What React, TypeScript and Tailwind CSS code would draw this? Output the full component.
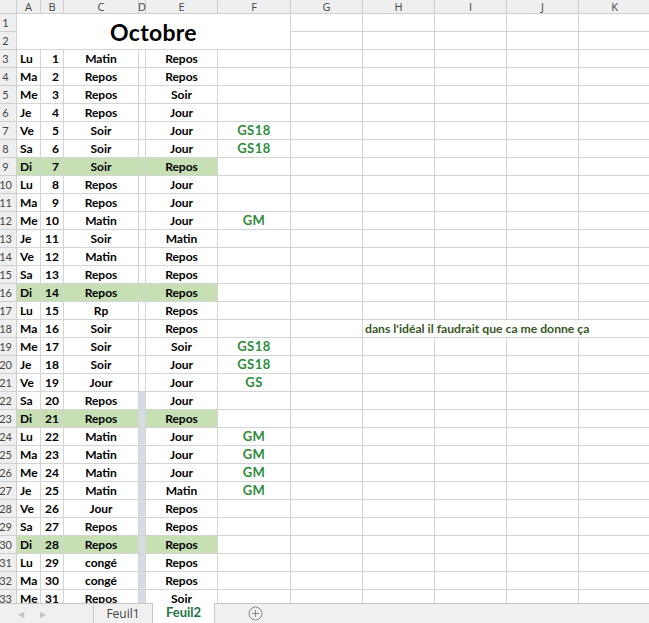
type Row = {
  n: number
  day: string
  d: number
  c: string
  e: string
  f?: string
  green?: boolean
}

const rows: Row[] = [
  { n: 3, day: 'Lu', d: 1, c: 'Matin', e: 'Repos' },
  { n: 4, day: 'Ma', d: 2, c: 'Repos', e: 'Repos' },
  { n: 5, day: 'Me', d: 3, c: 'Repos', e: 'Soir' },
  { n: 6, day: 'Je', d: 4, c: 'Repos', e: 'Jour' },
  { n: 7, day: 'Ve', d: 5, c: 'Soir', e: 'Jour', f: 'GS18' },
  { n: 8, day: 'Sa', d: 6, c: 'Soir', e: 'Jour', f: 'GS18' },
  { n: 9, day: 'Di', d: 7, c: 'Soir', e: 'Repos', green: true },
  { n: 10, day: 'Lu', d: 8, c: 'Repos', e: 'Jour' },
  { n: 11, day: 'Ma', d: 9, c: 'Repos', e: 'Jour' },
  { n: 12, day: 'Me', d: 10, c: 'Matin', e: 'Jour', f: 'GM' },
  { n: 13, day: 'Je', d: 11, c: 'Soir', e: 'Matin' },
  { n: 14, day: 'Ve', d: 12, c: 'Matin', e: 'Repos' },
  { n: 15, day: 'Sa', d: 13, c: 'Repos', e: 'Repos' },
  { n: 16, day: 'Di', d: 14, c: 'Repos', e: 'Repos', green: true },
  { n: 17, day: 'Lu', d: 15, c: 'Rp', e: 'Repos' },
  { n: 18, day: 'Ma', d: 16, c: 'Soir', e: 'Repos' },
  { n: 19, day: 'Me', d: 17, c: 'Soir', e: 'Soir', f: 'GS18' },
  { n: 20, day: 'Je', d: 18, c: 'Soir', e: 'Jour', f: 'GS18' },
  { n: 21, day: 'Ve', d: 19, c: 'Jour', e: 'Jour', f: 'GS' },
  { n: 22, day: 'Sa', d: 20, c: 'Repos', e: 'Jour' },
  { n: 23, day: 'Di', d: 21, c: 'Repos', e: 'Repos', green: true },
  { n: 24, day: 'Lu', d: 22, c: 'Matin', e: 'Jour', f: 'GM' },
  { n: 25, day: 'Ma', d: 23, c: 'Matin', e: 'Jour', f: 'GM' },
  { n: 26, day: 'Me', d: 24, c: 'Matin', e: 'Jour', f: 'GM' },
  { n: 27, day: 'Je', d: 25, c: 'Matin', e: 'Matin', f: 'GM' },
  { n: 28, day: 'Ve', d: 26, c: 'Jour', e: 'Repos' },
  { n: 29, day: 'Sa', d: 27, c: 'Repos', e: 'Repos' },
  { n: 30, day: 'Di', d: 28, c: 'Repos', e: 'Repos', green: true },
  { n: 31, day: 'Lu', d: 29, c: 'congé', e: 'Repos' },
  { n: 32, day: 'Ma', d: 30, c: 'congé', e: 'Repos' },
  { n: 33, day: 'Me', d: 31, c: 'Repos', e: 'Soir' },
]

const letters = ['A', 'B', 'C', 'D', 'E', 'F', 'G', 'H', 'I', 'J', 'K']

const cell = 'border-r border-b border-[#d4d4d4] flex items-end pb-[1px] leading-[15px] overflow-hidden whitespace-nowrap'
const hdr = 'bg-[#efefef] border-r border-b border-[#cfcfcf] text-[#444] text-[11px] flex items-center'

function EmptyCells({ n, count }: { n: number; count: number }) {
  return (
    <>
      {Array.from({ length: count }).map((_, i) => (
        <div key={`${n}-e${i}`} className={cell} />
      ))}
    </>
  )
}

function RowHeader({ n }: { n: number }) {
  return (
    <div className={`${hdr} justify-center pr-[5px]`}>
      <span className="leading-none">{n}</span>
    </div>
  )
}

export default function App() {
  return (
    <div className="w-[649px] h-[623px] overflow-hidden flex flex-col bg-white" style={{ fontFamily: 'Lato, "Open Sans", sans-serif' }}>
      <div className="flex-1 overflow-hidden">
        <div className="grid grid-cols-[17px_24px_23px_75px_7px_72px_73px_72px_72px_72px_72px_72px] grid-rows-[14px_18px_18px] auto-rows-[18px] w-[651px]">
          {/* column headers */}
          <div className={hdr} />
          {letters.map((l) => (
            <div key={l} className={`${hdr} justify-center`} style={{ fontFamily: '"Open Sans", sans-serif' }}>
              <span className="leading-none">{l}</span>
            </div>
          ))}

          {/* rows 1-2 with merged title */}
          <RowHeader n={1} />
          <div className="col-span-6 row-span-2 border-r border-b border-[#d4d4d4] flex items-center justify-center">
            <span className="text-[23px] font-bold text-black leading-none pt-[2px] tracking-[0.3px]">Octobre</span>
          </div>
          <EmptyCells n={1} count={5} />
          <RowHeader n={2} />
          <EmptyCells n={2} count={5} />

          {rows.map((r) => {
            const fill = r.green ? 'bg-[#c6e0b4]' : ''
            const band = r.n >= 22 ? 'bg-[#d6dce4]' : fill
            return (
              <div key={r.n} className="contents">
                <RowHeader n={r.n} />
                <div className={`${cell} ${fill} pl-[3px] text-[12px] font-bold text-black`}>{r.day}</div>
                <div className={`${cell} ${fill} justify-end pr-[4px] text-[12px] font-bold text-black`}>{r.d}</div>
                <div className={`${cell} ${fill} justify-center text-[12px] font-bold text-black`}>{r.c}</div>
                <div className={`${cell} ${band}`} />
                <div className={`${cell} ${fill} justify-center text-[12px] font-bold text-black`}>{r.e}</div>
                <div className={`${cell} justify-center text-[13px] font-bold text-[#2e8b3a] tracking-[0.5px]`}>{r.f ?? ''}</div>
                <div className={cell} />
                {r.n === 18 ? (
                  <div className={`${cell} col-span-4 pl-[2px] text-[12.2px] font-bold text-[#375623]`}>
                    dans l'idéal il faudrait que ca me donne ça
                  </div>
                ) : (
                  <EmptyCells n={r.n} count={4} />
                )}
              </div>
            )
          })}
        </div>
      </div>

      {/* sheet tabs */}
      <div className="h-[20px] shrink-0 bg-[#f0f0f0] border-t border-[#c6c6c6] flex items-stretch text-[12px]" style={{ fontFamily: '"Open Sans", sans-serif' }}>
        <div className="w-[94px] flex items-center border-r border-[#c6c6c6]">
          <span className="ml-[18px] text-[#c4c4c4] text-[8px]">◀</span>
          <span className="ml-[16px] text-[#c4c4c4] text-[8px]">▶</span>
        </div>
        <div className="w-[59px] flex items-center justify-center text-[#444] border-r border-[#c6c6c6]">Feuil1</div>
        <div className="w-[62px] -mt-[1px] bg-white flex items-center justify-center font-bold text-[#217346] border-r border-[#c6c6c6]" style={{ fontFamily: 'Lato, sans-serif' }}>
          <span className="text-[13px]">Feuil2</span>
        </div>
        <div className="flex-1 flex items-center">
          <svg className="ml-[33px]" width="15" height="15" viewBox="0 0 15 15" fill="none" stroke="#8a8a8a" strokeWidth="1">
            <circle cx="7.5" cy="7.5" r="6.5" />
            <path d="M7.5 4v7M4 7.5h7" />
          </svg>
        </div>
      </div>
    </div>
  )
}
